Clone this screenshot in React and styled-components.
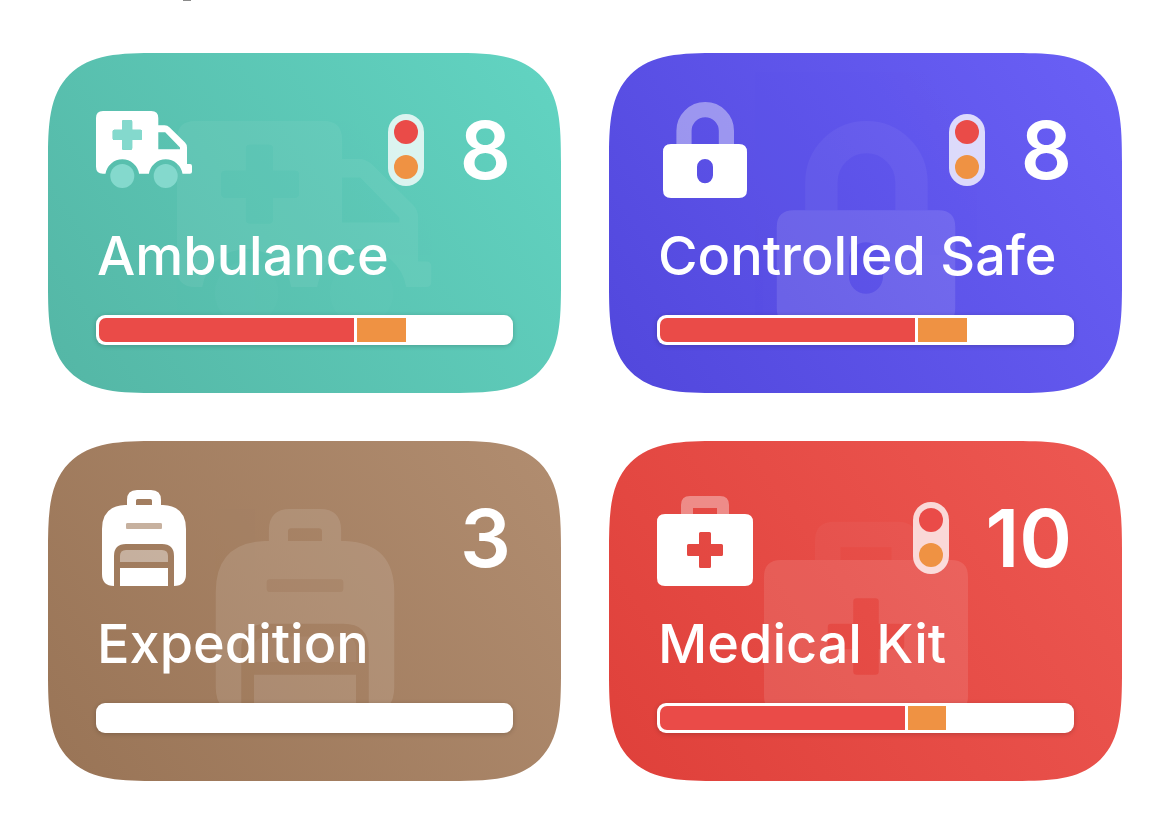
import React from "react";
import styled, { createGlobalStyle } from "styled-components";

const GlobalStyle = createGlobalStyle`
  * { box-sizing: border-box; }
  body {
    margin: 0;
    background: #ffffff;
    font-family: Inter, "Liberation Sans", sans-serif;
  }
`;

const Page = styled.main`
  padding: 0 48px 48px;
`;

const ScrolledHeading = styled.div`
  height: 1px;
  padding-left: 135px;
  margin-bottom: 52px;
`;

const Descender = styled.span`
  display: block;
  width: 8px;
  height: 1px;
  background: #8a8a8a;
`;

const Grid = styled.div`
  display: grid;
  grid-template-columns: repeat(auto-fit, minmax(min(100%, 480px), 1fr));
  gap: 48px;
`;

const Card = styled.article`
  display: grid;
  border-radius: 76px;
  overflow: hidden;
  color: #ffffff;
  background: linear-gradient(55deg, ${(p) => p.$from}, ${(p) => p.$to});

  @supports (corner-shape: squircle) {
    border-radius: 110px;
    corner-shape: superellipse(1.67);
  }
`;

const Watermark = styled.div`
  grid-area: 1 / 1;
  place-self: center;
  height: 204px;
  opacity: ${(p) => p.$strength};

  svg {
    display: block;
    height: 100%;
    width: auto;
  }
`;

const Content = styled.div`
  grid-area: 1 / 1;
  z-index: 1;
  min-width: 0;
  padding: 49px 48px 48px;
`;

const TopRow = styled.div`
  display: flex;
  align-items: center;
  height: 96px;
`;

const IconBox = styled.div`
  width: 96px;
  height: 96px;
  margin-right: auto;

  svg {
    display: block;
    width: 96px;
    height: 96px;
  }
`;

const Lights = styled.div`
  display: flex;
  flex-direction: column;
  gap: 11px;
  width: 36px;
  height: 72px;
  padding: 6px;
  margin-right: 36px;
  border-radius: 18px;
  background: rgba(255, 255, 255, 0.78);
`;

const Light = styled.span`
  width: 24px;
  height: 24px;
  border-radius: 50%;
  background: ${(p) => p.$color};
`;

const Count = styled.span`
  padding-right: 2px;
  font-size: 80px;
  line-height: 96px;
  font-weight: 600;
`;

const Title = styled.h2`
  margin: 24px 0 25px;
  padding-left: 1px;
  font-size: 54px;
  line-height: 68px;
  font-weight: 500;
`;

const Bar = styled.div`
  display: flex;
  gap: 3px;
  height: 30px;
  padding: 3px;
  border-radius: 9px;
  background: #ffffff;
  box-shadow: 0 1px 5px rgba(0, 0, 0, 0.2);
`;

const Segment = styled.span`
  background: ${(p) => p.$color};

  &:first-child {
    border-radius: 7px 0 0 7px;
  }
`;

const RED = "#ea4b48";
const ORANGE = "#ef9243";
const MINT = "#84d9cd";

/* `tight` trims the square box down to the drawing itself. */
const AmbulanceIcon = ({ tight }) => (
  <svg viewBox={tight ? "0 0 96 77" : "0 -9 96 96"} fill="#fff" aria-hidden="true">
    <path
      fillRule="evenodd"
      d="M7 0H55.300Q62.300 0 62.300 7V14.300H68.500Q71.500 14.300 73.700 16.500L89 31.600Q91 33.600 91 36.500V53H94Q96 53 96 55V60.700Q96 62.700 94 62.700H86.500A17 17 0 0 0 52.900 62.700H43.100A17 17 0 0 0 9.500 62.700H7Q0 62.700 0 55.700V7Q0 0 7 0ZM62.300 21.300V38.300H84V36.500L69.200 21.300ZM27.500 9Q26 9 26 10.500V18.800H18.200Q16.700 18.800 16.700 20.300V27.500Q16.700 29 18.200 29H26V37.200Q26 38.700 27.500 38.700H34.700Q36.200 38.700 36.200 37.200V29H44.500Q46 29 46 27.500V20.300Q46 18.800 44.500 18.800H36.200V10.500Q36.200 9 34.700 9Z"
    />
    <path
      fill={MINT}
      d="M27.500 9Q26 9 26 10.500V18.800H18.200Q16.700 18.800 16.700 20.300V27.500Q16.700 29 18.200 29H26V37.200Q26 38.700 27.500 38.700H34.700Q36.200 38.700 36.200 37.200V29H44.500Q46 29 46 27.500V20.300Q46 18.800 44.500 18.800H36.200V10.500Q36.200 9 34.700 9Z"
    />
    <circle cx="26.300" cy="65" r="12" fill={MINT} />
    <circle cx="69.700" cy="65" r="12" fill={MINT} />
  </svg>
);

const LockIcon = () => (
  <svg viewBox="0 0 96 96" fill="#fff" aria-hidden="true">
    <path
      d="M27 42V28.800A21.200 21.200 0 0 1 69.400 28.800V42"
      fill="none"
      stroke="#fff"
      strokeWidth="15.200"
      opacity="0.4"
    />
    <path
      fillRule="evenodd"
      d="M14 42H82Q90 42 90 50V88Q90 96 82 96H14Q6 96 6 88V50Q6 42 14 42ZM48 57A8 8 0 0 0 40 65V73.300A8 8 0 0 0 56 73.300V65A8 8 0 0 0 48 57Z"
    />
  </svg>
);

const BackpackIcon = () => (
  <svg viewBox="0 0 96 96" fill="#fff" aria-hidden="true">
    <path
      fillRule="evenodd"
      d="M41 0H55Q65 0 65 10V15H67Q90 16 90 39V84Q90 96 78 96V66Q78 54 66 54H30Q18 54 18 66V96Q6 96 6 84V39Q6 16 29 15H31V10Q31 0 41 0ZM41.500 9Q40 9 40 10.500V15H56V10.500Q56 9 54.500 9ZM31.500 33Q30 33 30 34.500V37.500Q30 39 31.500 39H64.500Q66 39 66 37.500V34.500Q66 33 64.500 33Z"
    />
    <rect x="30" y="33" width="36" height="6" rx="1.500" opacity="0.4" />
    <path d="M24 72V66Q24 60 30 60H66Q72 60 72 66V72Z" opacity="0.4" />
    <path d="M24 78H72V96H24Z" />
  </svg>
);

const KitIcon = () => (
  <svg viewBox="0 0 96 96" fill="#fff" aria-hidden="true">
    <path d="M24 24V15Q24 6 33 6H63Q72 6 72 15V24H60V18H36V24Z" opacity="0.37" />
    <path
      fillRule="evenodd"
      d="M8 24H88Q96 24 96 32V88Q96 96 88 96H8Q0 96 0 88V32Q0 24 8 24ZM43.500 42Q42 42 42 43.500V54H31.500Q30 54 30 55.500V64.500Q30 66 31.500 66H42V76.500Q42 78 43.500 78H52.500Q54 78 54 76.500V66H64.500Q66 66 66 64.500V55.500Q66 54 64.500 54H54V43.500Q54 42 52.500 42Z"
    />
  </svg>
);

const CARDS = [
  { title: "Ambulance", count: 8, Icon: AmbulanceIcon, from: "#54b6a5", to: "#62d4c2", strength: 0.05, red: 62.1, orange: 11.8 },
  { title: "Controlled Safe", count: 8, Icon: LockIcon, from: "#5147dc", to: "#6a60f6", strength: 0.11, red: 62.1, orange: 11.8 },
  { title: "Expedition", count: 3, Icon: BackpackIcon, from: "#997456", to: "#b18d70", strength: 0.11, red: 0, orange: 0 },
  { title: "Medical Kit", count: 10, Icon: KitIcon, from: "#df403a", to: "#ed5852", strength: 0.1, red: 59.7, orange: 9.2 },
];

export default function App() {
  return (
    <>
      <GlobalStyle />
      <Page>
        <ScrolledHeading>
          <Descender />
        </ScrolledHeading>
        <Grid>
          {CARDS.map(({ title, count, Icon, from, to, strength, red, orange }) => (
            <Card key={title} $from={from} $to={to}>
              <Watermark $strength={strength}>
                <Icon tight />
              </Watermark>
              <Content>
                <TopRow>
                  <IconBox>
                    <Icon />
                  </IconBox>
                  {red > 0 && (
                    <Lights>
                      <Light $color={RED} />
                      <Light $color={ORANGE} />
                    </Lights>
                  )}
                  <Count>{count}</Count>
                </TopRow>
                <Title>{title}</Title>
                <Bar role="img" aria-label={`${title} status`}>
                  {red > 0 && <Segment $color={RED} style={{ width: `${red}%` }} />}
                  {orange > 0 && <Segment $color={ORANGE} style={{ width: `${orange}%` }} />}
                </Bar>
              </Content>
            </Card>
          ))}
        </Grid>
      </Page>
    </>
  );
}
